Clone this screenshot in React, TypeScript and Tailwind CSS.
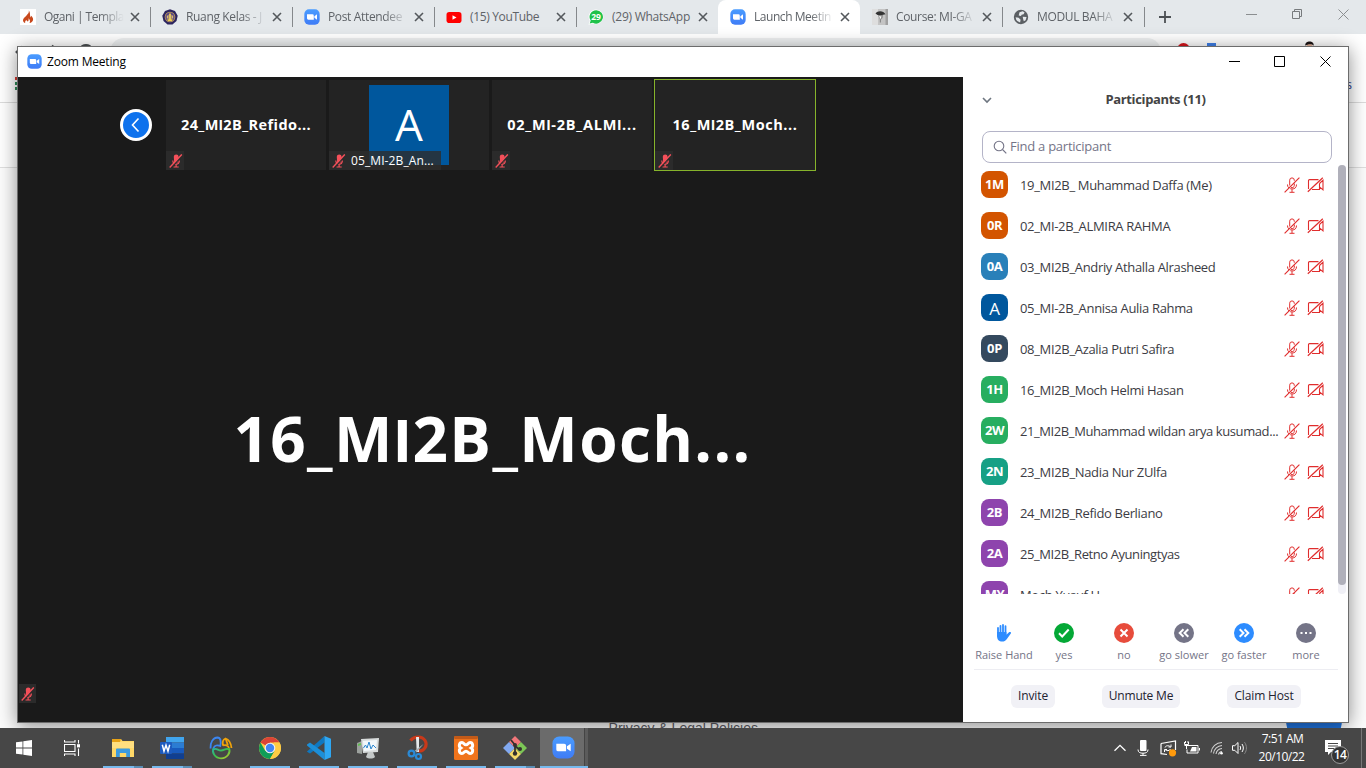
import React from "react";

function ZoomLogo({ className }: { className: string }) {
  return (
    <svg viewBox="0 0 24 24" className={className}>
      <defs>
        <linearGradient id="zg" x1="0" y1="0" x2="0" y2="1">
          <stop offset="0" stopColor="#4a9cff" />
          <stop offset="1" stopColor="#3f7cf6" />
        </linearGradient>
      </defs>
      <rect x="0.5" y="0.5" width="23" height="23" rx="7" fill="url(#zg)" />
      <path d="M4.5 8h8.2a2 2 0 0 1 2 2v6H6.5a2 2 0 0 1-2-2zM15.6 10.8l3.9-2.8v8l-3.9-2.8z" fill="#fff" />
    </svg>
  );
}

function FlameIcon() {
  return (
    <svg viewBox="0 0 16 16" className="size-4 bg-white">
      <path d="M8.8 1.5c.6 2.4-1 3.300-2.300 5C5 8.300 3 9.300 3 11.200c0 1.300.9 2.300 2.300 2.900-.6-1.500.1-2.600 1.300-3.200.2 1 .5 1.300 1.300 1.500 1-1 .9-2.200.3-3.200 1.800 1 2.300 2.900 1.300 4.900 2-.5 3.600-1.700 3.600-3.900 0-1.500-1-2-1.400-3.400-.6.500-.8 1-.7 1.700C9.300 6.600 10.800 4 8.800 1.500z" fill="#c8481c" />
    </svg>
  );
}

function CrestIcon() {
  return (
    <svg viewBox="0 0 16 16" className="size-4">
      <path d="M8 .3l5 1.800 2.700 4.600-1.200 5.200L10.500 15.500h-5L1.500 11.900.3 6.700 3 2.100z" fill="#2c2560" />
      <circle cx="8" cy="8" r="5.300" fill="#c8a254" />
      <circle cx="8" cy="8" r="4.600" fill="#574487" />
      <path d="M8 3.800l1.500 2.400v4.600H6.500V6.200zM5 10.500h6l-1 1.600H6z" fill="#f0cf4a" />
      <path d="M7.300 6h1.400v4H7.300zM4.800 6.500h1.200v3H4.800zM10 6.500h1.200v3H10z" fill="#d9b877" />
    </svg>
  );
}

function YoutubeIcon() {
  return (
    <svg viewBox="0 0 16 16" className="size-4">
      <rect x="0.500" y="3" width="15" height="11" rx="2.800" fill="#f00" />
      <path d="M6.500 6.200v4.600l4-2.300z" fill="#fff" />
    </svg>
  );
}

function WhatsappIcon() {
  return (
    <svg viewBox="0 0 16 16" className="size-4">
      <path d="M8.200.4a7.400 7.400 0 1 1-3.400 14.100L.5 15.800l1.300-4.100A7.400 7.400 0 0 1 8.200.4z" fill="#fff" />
      <path d="M8.200 1.200a6.700 6.700 0 1 1-3.300 12.500l-3.200.9 1-3A6.700 6.700 0 0 1 8.200 1.200z" fill="#1fc24a" />
      <text x="8" y="11" fontSize="8.500" fontWeight="700" textAnchor="middle" fill="#fff" fontFamily="Open Sans, sans-serif">29</text>
    </svg>
  );
}

function CourseIcon() {
  return (
    <svg viewBox="0 0 16 16" className="size-4">
      <rect width="16" height="16" fill="#c4c4c4" />
      <rect width="6" height="16" fill="#dedede" />
      <rect x="13.500" width="2.500" height="16" fill="#a0a0a0" />
      <path d="M3.500 4.500C5.500 1.500 11.500 1.500 13.500 5.300l-3.500.7H5.500z" fill="#333" />
      <path d="M6 6h5l-.5 3L9 10.500 9 13.500H7.800V10z" fill="#8a8a8a" />
      <path d="M7 7l2.500.5-1 2.800z" fill="#fff" />
    </svg>
  );
}

function GlobeIcon() {
  return (
    <svg viewBox="0 0 16 16" className="-ml-px size-4">
      <circle cx="8" cy="8" r="7.200" fill="#5b5f63" />
      <path d="M2.600 8.200l3 .6 2 2-.5 2.800A6 6 0 0 1 2.600 8.200zM6.500 3.200l3.300-.9 1.800 1.200-1 1.700-2 .5-.6 1.400-2.300-.7zM9.700 7.800l3.900.3-1 3.200-1.800 1-.6-2z" fill="#e4e8eb" />
    </svg>
  );
}

const fadeMask = "[mask-image:linear-gradient(to_right,black_70%,transparent)]";

const tabs = [
  { icon: <FlameIcon />, title: "Ogani | Templa", track: "tracking-[-0.520px]", fade: true, sep: true },
  { icon: <CrestIcon />, title: "Ruang Kelas - J", track: "tracking-[-0.350px]", fade: true, sep: true },
  { icon: <ZoomLogo className="size-4" />, title: "Post Attendee", track: "tracking-[-0.350px]", fade: true, sep: true },
  { icon: <YoutubeIcon />, title: "(15) YouTube", track: "tracking-[-0.350px]", fade: false, sep: true },
  { icon: <WhatsappIcon />, title: "(29) WhatsApp", track: "tracking-[-0.250px]", fade: false, sep: false },
  { icon: <ZoomLogo className="size-4" />, title: "Launch Meetin", track: "tracking-[-0.450px]", fade: true, sep: false, active: true },
  { icon: <CourseIcon />, title: "Course: MI-GA", track: "tracking-[-0.350px]", fade: true, sep: true },
  { icon: <GlobeIcon />, title: "MODUL BAHA", track: "tracking-[-0.350px]", fade: true, sep: true },
];

function Browser() {
  return (
    <div className="flex h-[728px] flex-col bg-white">
      <div className="flex h-[34px] shrink-0 bg-[#e4e8eb] pl-2">
        {tabs.map((t) => (
          <div
            key={t.title}
            className={
              "relative flex h-[34px] w-[142px] shrink-0 items-center pl-3 " +
              (t.active ? "rounded-t-lg bg-white" : "")
            }
          >
            {t.icon}
            <div className={"ml-2 w-[80px] text-[12px] whitespace-nowrap text-[#5f6368] " + t.track + " " + (t.fade ? fadeMask : "")}>
              {t.title}
            </div>
            <svg viewBox="0 0 10 10" className="ml-[6px] size-[10px]">
              <path d="M1 1l8 8M9 1l-8 8" stroke="#54585c" strokeWidth="1.600" />
            </svg>
            {t.sep && <div className="absolute top-[7px] -right-px h-5 w-px bg-[#85888b]" />}
          </div>
        ))}
        <svg viewBox="0 0 12 12" className="mt-[11px] ml-[15px] size-3">
          <path d="M6 0v12M0 6h12" stroke="#4c5054" strokeWidth="1.800" />
        </svg>
        <div className="ml-auto flex items-start gap-[35px] pt-[9px] pr-[17px]">
          <svg viewBox="0 0 11 11" className="size-[11px]"><path d="M0 5.500h11" stroke="#8b8e90" /></svg>
          <svg viewBox="0 0 11 11" className="size-[11px]"><path d="M.5 2.500h7v7h-7zM2.500 2.500v-2h7v7h-2" stroke="#777a7d" fill="none" /></svg>
          <svg viewBox="0 0 11 11" className="size-[11px]"><path d="M.5.5l10 10M10.500.5l-10 10" stroke="#8b8e90" /></svg>
        </div>
      </div>
      <div className="flex h-[35px] shrink-0 items-start pt-1">
        <svg viewBox="0 0 96 34" className="h-[34px] w-24">
          <path d="M22 8.500L16.500 14l5.500 5.500M52 7.500l5 5.500M80 10.500a7 7 0 0 1 12 0" stroke="#4b4f52" strokeWidth="2" fill="none" />
        </svg>
        <div className="ml-[14px] h-7 w-[1051px] rounded-full bg-[#eef0f1]" />
        <div className="mt-[5px] flex gap-[17px] pl-[16px]">
          <div className="size-[13px] rounded-full bg-[#d8141b]" />
          <div className="h-3 w-[9px] bg-[#3e7fe8]" />
        </div>
        <svg viewBox="0 0 16 16" className="mt-[2px] ml-[86px] size-[15px]">
          <circle cx="8" cy="7.500" r="3.500" fill="#e8b49a" />
          <path d="M3.500 6C3 .5 13 0 12.500 6 10 3.500 6 4.500 3.500 6z" fill="#1c1414" />
        </svg>
      </div>
      <div className="flex h-[34px] shrink-0 items-center justify-between border-b border-[#dcdcdc] pl-[15px]">
        <div className="flex flex-col gap-[2px] pb-1">
          <div className="h-[3px] w-3 bg-[#d63b34]" />
          <div className="h-[3px] w-3 bg-[#2e8b57]" />
          <div className="h-[3px] w-3 bg-[#2e8b57]" />
        </div>
        <div className="pr-[14px] pb-[2px] text-[12px] text-[#2b3a86]">s</div>
      </div>
      <div className="h-[65px] shrink-0 border-b border-[#dfdfdf] bg-white" />
      <div className="flex min-h-0 grow items-end justify-end overflow-hidden bg-[#fcfcfc]">
        <div className="mr-[528px] h-2 font-['Liberation_Sans'] text-[14px] leading-4 whitespace-nowrap text-[#5c5c66]">
          Privacy &amp; Legal Policies
        </div>
        <div className="mr-[24px] size-14 shrink-0 translate-y-5 rounded-full bg-[#1f74e0]" />
      </div>
    </div>
  );
}

function MutedMic({ className }: { className: string }) {
  return (
    <svg viewBox="0 0 14 14" className={className}>
      <path d="M4.800 2.800a2.400 2.400 0 0 1 4.800 0L9.200 8.600H5.200z" fill="#f4505a" />
      <path d="M3.800 6.500c.1 2.600 1.500 3.700 3.300 3.700s3.200-1.100 3.300-3.700M7.100 10v2.500M4.500 13h5.200" stroke="#f4505a" strokeWidth="1.200" fill="none" />
      <path d="M2.200 13.800L13.300 1.600" stroke="#2b2b2b" strokeWidth="1.400" />
      <path d="M.7 13.400L12.800.4" stroke="#f4505a" strokeWidth="1.400" />
    </svg>
  );
}

/* Bold display name with a plain, unserifed capital I. */
function BoldName({ text }: { text: string }) {
  return (
    <>
      {text.split(/(I)/).map((part, i) =>
        part === "I" ? <span key={i} className="font-['Liberation_Sans'] leading-none">I</span> : part
      )}
    </>
  );
}

const tiles = [
  { title: "24_MI2B_Refido...", track: "tracking-[0.420px]" },
  { letter: "A", label: "05_MI-2B_An..." },
  { title: "02_MI-2B_ALMI...", track: "tracking-[0.780px]" },
  { title: "16_MI2B_Moch...", track: "tracking-[0.580px]", active: true },
];

function Stage() {
  return (
    <div className="flex w-[945px] shrink-0 flex-col bg-[#1a1a1a]">
      <div className="flex h-[93px] shrink-0 gap-[3px] pt-[3px] pl-[102px]">
        <div className="mt-[29px] mr-[11px] flex size-8 items-center justify-center rounded-full border-[3px] border-white bg-[#0e72ed]">
          <svg viewBox="0 0 16 16" className="size-4"><path d="M10.500 1.500L4.500 8l6 6.500" stroke="#fff" strokeWidth="1.600" fill="none" /></svg>
        </div>
        {tiles.map((t, i) => (
          <div
            key={i}
            className={"relative flex h-[90px] w-40 items-center justify-center bg-[#232323] " + (t.active ? "outline outline-[#86b32b]" : "")}
          >
            {t.letter ? (
              <div className="flex size-20 items-center justify-center bg-[#00579d] pb-[3px] text-[44px] font-medium text-white">{t.letter}</div>
            ) : (
              <div className={"text-[14.500px] font-bold whitespace-nowrap text-white " + t.track}>
                <BoldName text={t.title ?? ""} />
              </div>
            )}
            <div className="absolute bottom-0 left-0 flex h-[19px] items-center gap-[5px] bg-[#2d2d2d]/80 pr-[1px] pl-[3px] text-[12px] whitespace-nowrap text-white">
              <MutedMic className="size-[14px]" />
              {t.label && <span className="pr-[6px] tracking-[0.100px]">{t.label}</span>}
            </div>
          </div>
        ))}
      </div>
      <div className="flex grow items-center justify-center pt-[22px] pl-[4px] text-[62px] font-bold whitespace-nowrap text-white">
        <span className="tracking-[1.400px]"><BoldName text="16_MI2B_Moch..." /></span>
      </div>
      <div className="mb-[19px] ml-px flex h-[19px] w-[17px] shrink-0 items-center justify-center bg-[#2b2b2b]">
        <MutedMic className="size-[14px]" />
      </div>
    </div>
  );
}

function MicOff() {
  return (
    <svg viewBox="0 0 16 16" className="size-4" fill="none" stroke="#e02d2d" strokeWidth="1">
      <path d="M5.700 8.500V3.200a2.300 2.300 0 0 1 4.600 0v.6M10.300 6.500v2a2.300 2.300 0 0 1-3.300 2M3.500 7.500c0 1.500.4 2.500 1.200 3.300M12.500 7.500c0 3-1.700 4.500-4.500 4.500-.7 0-1.300-.1-1.800-.3M8 12.200v3M5.500 15.300h5" />
      <path d="M.6 15.400L15.400.6" strokeWidth="1.200" />
    </svg>
  );
}

function CamOff() {
  return (
    <svg viewBox="0 0 17 16" className="h-4 w-[17px]" fill="none" stroke="#e02d2d" strokeWidth="1.100">
      <path d="M1.500 12V3.600a1 1 0 0 1 1-1h9M12.500 6.500v6h-7.500M12.500 6.500l3.500-3.300v9.600l-3.500-3" />
      <path d="M.8 14.800L15.800.8" strokeWidth="1.200" />
    </svg>
  );
}

const people = [
  { a: "1M", c: "bg-[#d35400]", n: "19_MI2B_ Muhammad Daffa (Me)" },
  { a: "0R", c: "bg-[#d35400]", n: "02_MI-2B_ALMIRA RAHMA" },
  { a: "0A", c: "bg-[#2980b9]", n: "03_MI2B_Andriy Athalla Alrasheed" },
  { a: "A", c: "bg-[#00579d]", n: "05_MI-2B_Annisa Aulia Rahma" },
  { a: "0P", c: "bg-[#34495e]", n: "08_MI2B_Azalia Putri Safira" },
  { a: "1H", c: "bg-[#27ae60]", n: "16_MI2B_Moch Helmi Hasan" },
  { a: "2W", c: "bg-[#27ae60]", n: "21_MI2B_Muhammad wildan arya kusumad..." },
  { a: "2N", c: "bg-[#16a085]", n: "23_MI2B_Nadia Nur ZUlfa" },
  { a: "2B", c: "bg-[#8e44ad]", n: "24_MI2B_Refido Berliano" },
  { a: "2A", c: "bg-[#8e44ad]", n: "25_MI2B_Retno Ayuningtyas" },
  { a: "MY", c: "bg-[#8e44ad]", n: "Moch Yusuf H" },
];

function Dot({ fill, d }: { fill: string; d: string }) {
  return (
    <svg viewBox="0 0 20 20" className="size-5">
      <circle cx="10" cy="10" r="10" fill={fill} />
      <path d={d} stroke="#fff" strokeWidth="2" fill="none" />
    </svg>
  );
}

const reactions = [
  {
    label: "Raise Hand",
    w: "w-[64px]",
    icon: (
      <svg viewBox="0 0 20 20" className="size-5">
        <path d="M4 5v8M6.500 2.800v9M9 2V12M11.500 3.200V12" stroke="#2d8cff" strokeWidth="1.800" strokeLinecap="round" />
        <path d="M3.100 9h9.300v2.700l2.600-2.500c1-.5 2.400.2 2 1l-4.300 6c-1.200 1.800-2.600 2.300-4.500 2.300-3.200 0-5.100-2-5.100-5z" fill="#2d8cff" />
      </svg>
    ),
  },
  { label: "yes", w: "w-[56px]", icon: <Dot fill="#04a836" d="M5 10.300l3.200 3.200 6.500-7" /> },
  { label: "no", w: "w-[64px]", icon: <Dot fill="#e74c3c" d="M6.500 6.500l7 7M13.500 6.500l-7 7" /> },
  { label: "go slower", w: "w-[56px]", icon: <Dot fill="#747487" d="M9.500 6.200L5.700 10l3.800 3.800M14.300 6.200L10.500 10l3.800 3.800" /> },
  { label: "go faster", w: "w-[64px]", icon: <Dot fill="#2d8cff" d="M5.700 6.200L9.500 10l-3.800 3.800M10.500 6.200l3.800 3.800-3.800 3.800" /> },
  { label: "more", w: "w-[60px]", icon: <Dot fill="#747487" d="M4.500 10h2M9 10h2M13.500 10h2" /> },
];

function Participants() {
  return (
    <div className="flex grow flex-col bg-white">
      <div className="relative flex h-[54px] shrink-0 items-center justify-center pb-[9px] text-[13px]">
        <svg viewBox="0 0 10 8" className="absolute top-[19px] left-[19px] h-2 w-[10px]">
          <path d="M1 2l4 4 4-4" stroke="#6e7680" strokeWidth="1.600" fill="none" />
        </svg>
        <span className="font-bold tracking-[-0.340px] text-[#444]">Participants (11)</span>
      </div>
      <div className="mx-[19px] mr-4 flex h-8 shrink-0 items-center gap-[3px] rounded-[8px] border border-[#b4b4c8] pb-px pl-[10px] text-[13px] text-[#747487]">
        <svg viewBox="0 0 14 14" className="size-[14px]" fill="none" stroke="#747487" strokeWidth="1.100">
          <circle cx="6" cy="6" r="4.800" />
          <path d="M9.500 9.500l3.800 3.800" />
        </svg>
        <span className="tracking-[-0.250px]">Find a participant</span>
      </div>
      <div className="mt-px flex h-[430px] shrink-0 overflow-hidden pr-[2px]">
        <div className="flex w-[375px] shrink-0 flex-col">
          {people.map((p) => (
            <div key={p.n} className="flex h-[41px] shrink-0 items-center pr-[13px] pl-[18px]">
              <div
                className={
                  "flex size-[27px] shrink-0 items-center justify-center rounded-[8px] text-white " +
                  (p.a === "A" ? "pt-[2px] text-[17px] " : "pt-px text-[13px] font-bold tracking-[-0.400px] ") +
                  p.c
                }
              >
                {p.a}
              </div>
              <span
                className={
                  "ml-3 w-[264px] pt-[3px] text-[13px] whitespace-nowrap text-[#3c3c44] " +
                  (p.n.startsWith("21") ? "tracking-[-0.410px]" : p.n.startsWith("25") ? "tracking-[-0.420px]" : "tracking-[-0.330px]")
                }
              >
                {p.n}
              </span>
              <span className="flex gap-[7px]">
                <MicOff />
                <CamOff />
              </span>
            </div>
          ))}
        </div>
        <div className="mt-px h-[429px] w-2 shrink-0 rounded-full bg-[#f0f0f6]">
          <div className="h-[420px] w-2 rounded-full bg-[#b0b0ba]" />
        </div>
      </div>
      <div className="mr-[10px] ml-[11px] flex h-[76px] shrink-0 items-start border-b border-[#ededf2] pt-[29px]">
        <div className="-ml-[2px] flex">
          {reactions.map((r) => (
            <div key={r.label} className={"flex flex-col items-center text-[11px] whitespace-nowrap text-[#747487] " + r.w}>
              {r.icon}
              <span className="mt-[3px] leading-[18px]">{r.label}</span>
            </div>
          ))}
        </div>
      </div>
      <div className="flex items-start pt-[15px] pl-12 text-[12px] whitespace-nowrap text-[#222230]">
        <button className="h-[23px] w-11 rounded-md bg-[#f1f1f6] pb-px tracking-[-0.100px]">Invite</button>
        <button className="ml-[47px] h-[23px] w-[78px] rounded-md bg-[#f1f1f6] pb-px tracking-[-0.200px]">Unmute Me</button>
        <button className="ml-[47px] h-[23px] w-[74px] rounded-md bg-[#f1f1f6] pb-px tracking-[-0.150px]">Claim Host</button>
      </div>
    </div>
  );
}

function MeetingWindow() {
  return (
    <div className="absolute top-[46px] left-[17px] flex h-[677px] w-[1332px] flex-col border border-[#6c6c6c] bg-white shadow-[0_3px_18px_rgba(0,0,0,0.45)]">
      <div className="flex h-[30px] shrink-0 items-center pl-[9px]">
        <ZoomLogo className="mb-px size-[15px]" />
        <span className="ml-[5px] text-[12px] tracking-[-0.180px] text-black">Zoom Meeting</span>
        <div className="ml-auto flex gap-[34px] pr-[17px] pb-[2px]">
          <svg viewBox="0 0 11 11" className="size-[11px]"><path d="M0 5.500h11" stroke="#000" /></svg>
          <svg viewBox="0 0 11 11" className="size-[11px]"><path d="M.5.5h10v10H.5z" stroke="#000" fill="none" /></svg>
          <svg viewBox="0 0 11 11" className="ml-px size-[11px]"><path d="M.5.5l10 10M10.500.5l-10 10" stroke="#000" /></svg>
        </div>
      </div>
      <div className="flex min-h-0 grow">
        <Stage />
        <Participants />
      </div>
    </div>
  );
}

const apps = [
  {
    name: "Files", run: "split",
    icon: (
      <svg viewBox="0 0 24 24" className="size-6">
        <path d="M1 3h9l1.500 2H23v16H1z" fill="#ffd867" />
        <path d="M1 3h9l-1 3H1z" fill="#e8a317" />
        <path d="M1 6h22v6H1z" fill="#ffdf80" />
        <path d="M5 13.500a1 1 0 0 1 1-1h12a1 1 0 0 1 1 1V21h-3.800v-4H8.800v4H5z" fill="#3c9be0" />
      </svg>
    ),
  },
  {
    name: "Word", run: "split",
    icon: (
      <svg viewBox="0 0 24 24" className="size-6">
        <path d="M6 1h18v5.500H6z" fill="#41a5ee" /><path d="M6 6.500h18V12H6z" fill="#2b7cd3" />
        <path d="M6 12h18v5.500H6z" fill="#185abd" /><path d="M6 17.500h18V23H6z" fill="#103f91" />
        <rect y="6" width="12" height="12" rx="1" fill="#1d5bbf" />
        <path d="M2.300 8.800l1.700 6.400 2-6 2 6 1.700-6.400" stroke="#fff" strokeWidth="1.500" fill="none" />
      </svg>
    ),
  },
  {
    name: "Clover", run: "",
    icon: (
      <svg viewBox="0 0 24 24" className="size-6" fill="none" strokeWidth="1.800">
        <defs><linearGradient id="cl" x1="0" y1="0" x2="1" y2="1"><stop offset="0" stopColor="#27b0a0" /><stop offset="0.500" stopColor="#3cc04a" /><stop offset="1" stopColor="#c8cf2a" /></linearGradient></defs>
        <path d="M1.500 12.500C1 6.500 4 1.800 8.500 1.500c3 0 3.800 3.500 2.800 8.500C8.500 8.500 5.500 9.500 4.500 12" stroke="#3c86f0" />
        <path d="M14 9.500C13.200 6 14.500 3.300 16.500 2.500c3 1 5.500 5 6 9.500M14 9.500c2.500-1 5 0 6 2.500M16.800 3l2 6" stroke="#f0a30a" />
        <path d="M4.500 12c-2 4.500 1.500 10.300 7.500 10.300S22 17 20 12M4.500 13.500c2.500-2 4.500 1 7.500 1s5.500-3 8-1" stroke="url(#cl)" />
      </svg>
    ),
  },
  {
    name: "Chrome", run: "full",
    icon: (
      <svg viewBox="0 0 24 24" className="size-6">
        <circle cx="12" cy="12" r="11" fill="#fc4" />
        <path d="M12 12L2.500 6.500A11 11 0 0 1 21.500 6.500H12z" fill="#db4437" />
        <path d="M2.500 6.500A11 11 0 0 0 12 23l4.800-8.300L7.200 14.700z" fill="#0f9d58" />
        <path d="M21.500 6.500A11 11 0 0 1 12 23l4.800-8.300L16 6.500z" fill="#fc4" />
        <circle cx="12" cy="12" r="5.300" fill="#f1f1f1" /><circle cx="12" cy="12" r="4.200" fill="#4285f4" />
      </svg>
    ),
  },
  {
    name: "Code", run: "full",
    icon: (
      <svg viewBox="0 0 24 24" className="size-6">
        <path d="M0 15.500L17.500 0v6.500L3 17.500 0 15.800z" fill="#0f78c0" />
        <path d="M0 8.500l3-2L17.500 17v7L0 9.500z" fill="#1c8fd8" />
        <path d="M17.500 0L24 2.800v18.400L17.500 24z" fill="#2ea7f2" />
      </svg>
    ),
  },
  {
    name: "Monitor", run: "full",
    icon: (
      <svg viewBox="0 0 24 24" className="size-6">
        <path d="M1 7l5-2v13l-5-1z" fill="#9ca19d" /><path d="M2 8l3-1v2l-3 1z" fill="#5fc04f" />
        <path d="M5 3l18-1-1 14-15 1z" fill="#d8dcdc" /><path d="M7 5l14-1-1 10-12 1z" fill="#f2f7fa" />
        <path d="M7.500 12l2-3 1.500 3 2-6 2 7 2-4 3 3" stroke="#2a86cf" fill="none" />
        <path d="M12 16h5l2 5c-2 2-7 2-9 0z" fill="#c4c8c8" />
      </svg>
    ),
  },
  {
    name: "Snip", run: "full",
    icon: (
      <svg viewBox="0 0 24 24" className="size-6 overflow-visible" fill="none">
        <path d="M5.500 4.500C9.500-.2 17-.2 20 4.500S19 16.500 13 14.500" stroke="#c8391a" strokeWidth="3.200" />
        <path d="M11 1h3V16h-2.300z" fill="#e6e9eb" /><path d="M18.500 8l-7 8.500-1.500-2z" fill="#a8aeb2" />
        <circle cx="6.500" cy="17.500" r="2.900" stroke="#2a8ad6" strokeWidth="2.200" /><circle cx="13.500" cy="20.500" r="2.500" stroke="#2a8ad6" strokeWidth="2.200" />
      </svg>
    ),
  },
  {
    name: "Xampp", run: "full",
    icon: (
      <svg viewBox="0 0 24 24" className="size-6">
        <rect width="24" height="24" rx="1.500" fill="#f0741c" /><rect width="24" height="3" rx="1.500" fill="#c25a18" />
        <path d="M8 6.500c-3 0-3.500 4-1.200 5.500C4.500 13.500 5 17.500 8 17.500c2 0 2-2.300 4-2.300s2 2.300 4 2.300c3 0 3.500-4 1.200-5.500C19.500 10.500 19 6.500 16 6.500c-2 0-2 2.300-4 2.300s-2-2.300-4-2.300z" fill="none" stroke="#fff" strokeWidth="3" />
      </svg>
    ),
  },
  {
    name: "Git", run: "split",
    icon: (
      <svg viewBox="0 0 24 24" className="size-6">
        <path d="M12 0l6 6-6 6-6-6z" fill="#f2777a" /><path d="M6 6l6 6-6 6-6-6z" fill="#82a9f0" />
        <path d="M18 6l6 6-6 6-6-6z" fill="#7cc656" /><path d="M12 12l6 6-6 6-6-6z" fill="#f4d868" />
        <path d="M8 4l4 5v9M12 10l5 4" stroke="#33302e" strokeWidth="1.800" fill="none" />
        <circle cx="12" cy="9" r="2" fill="#33302e" /><circle cx="12" cy="17.500" r="2.200" fill="#33302e" /><circle cx="17" cy="13" r="2" fill="#33302e" />
      </svg>
    ),
  },
];

function Taskbar() {
  return (
    <div className="relative flex h-10 items-center bg-[#474747]">
      <svg viewBox="0 0 16 16" className="ml-4 size-4" fill="#fff">
        <path d="M0 2.300l6.500-.9v6.200H0zM7.300 1.300L16 0v7.600H7.300zM0 8.400h6.500v6.200L0 13.700zM7.300 8.400H16V16l-8.700-1.300z" />
      </svg>
      <svg viewBox="0 0 17 16" className="ml-8 h-4 w-[17px]" fill="none" stroke="#fff" strokeWidth="1.100">
        <path d="M.5 4.500h10.500v7H.5zM.5 0v2h10.500V0M.5 16v-2h10.500v2M14.500 0v3.500M14.500 8.500V16" />
        <path d="M13 4.200h3v3.200h-3z" fill="#fff" stroke="none" />
      </svg>
      <div className="ml-[22px] flex h-10 gap-[9px]">
        {apps.map((a) => (
          <div key={a.name} className="flex h-10 w-10 flex-col items-center justify-between pt-[8px]">
            {a.icon}
            {a.run === "full" && <div className="h-[2px] w-10 bg-[#76b9ed]" />}
            {a.run === "split" && (
              <div className="flex h-[2px] w-10"><div className="w-[31px] bg-[#76b9ed]" /><div className="grow bg-[#5a8db4]" /></div>
            )}
          </div>
        ))}
      </div>
      <div className="ml-[5px] flex h-10 w-12 border-b-2 border-[#76b9ed] bg-[#6b6b6b]">
        <div className="flex w-[45px] items-center justify-center border-r border-[#444] pl-[3px]"><ZoomLogo className="size-[23px]" /></div>
        <div className="grow bg-[#5b5b5b]" />
      </div>
      <div className="ml-auto flex items-center pr-[17px] text-white">
        <svg viewBox="0 0 12 8" className="mr-[11px] h-2 w-3"><path d="M.5 6.800L6 1.300l5.500 5.500" stroke="#fff" strokeWidth="1.300" fill="none" /></svg>
        <svg viewBox="0 0 12 16" className="mr-[10px] h-4 w-3" fill="none" stroke="#fff">
          <rect x="3" y="0" width="6.500" height="11" rx="1" fill="#fff" stroke="none" />
          <path d="M1 9.500c0 3 2 3.700 5 3.700s5-.7 5-3.700M6 13v2.500M3 15.400h6.500" />
        </svg>
        <svg viewBox="0 0 18 17" className="mr-[6px] h-[17px] w-[18px]" fill="none" stroke="#fff">
          <path d="M2 3.500L16.500 1v9M8 14.500l-6-.8V3.500" strokeWidth="1.200" />
          <path d="M6 7.500c.5-2 4-2.500 5.500-.5M12 4.500V7H9.500M11.500 9c-.8 2-4 2.300-5.500.5M5.500 12V9.500H8" />
          <circle cx="13.500" cy="12.800" r="3.600" fill="#ff9a0c" stroke="none" />
        </svg>
        <svg viewBox="0 0 17 14" className="mr-[10px] h-[14px] w-[17px]" fill="none" stroke="#fff">
          <path d="M5 4.500h10v7.500H4V8.500" /><path d="M16.500 7v2.500" strokeWidth="1.300" />
          <path d="M9 6h4.500v4.500H7z" fill="#fff" stroke="none" /><path d="M1.500 1v2.500h4V1M3.500 4v4M2.500 0v2M5 0v2M1.500 4.500h4" />
        </svg>
        <svg viewBox="0 0 14 14" className="mr-[8px] size-[14px]" fill="none" stroke="#d0d0d0" strokeWidth="1.100">
          <path d="M1 11.500A11 11 0 0 1 12 1.500M3.500 12.500A9 9 0 0 1 12 4.500M6 13a6.500 6.500 0 0 1 6-5.500M8.500 13.500a4 4 0 0 1 3.500-3" />
          <circle cx="11.500" cy="12.300" r="1.300" fill="#fff" stroke="none" />
        </svg>
        <svg viewBox="0 0 16 14" className="mr-[9px] h-[14px] w-4" fill="none" stroke="#fff">
          <path d="M.5 4.700h2.300L6 1.500v11L2.800 9.300H.5z" /><path d="M8 5c.8 1.200.8 2.800 0 4M10 3c1.800 2.500 1.800 5.500 0 8" /><path d="M12.500 1.200c2.600 3.500 2.600 8 0 11.600" stroke="#8a8a8a" />
        </svg>
        <div className="flex w-[52px] flex-col items-center text-[12px] leading-[18px] tracking-[-0.500px] whitespace-nowrap">
          <span className="pr-px">7:51 AM</span>
          <span className="pr-[3px]">20/10/22</span>
        </div>
        <div className="relative ml-[16px] h-6 w-6">
          <svg viewBox="0 0 17 16" className="mt-[3px] -ml-px h-4 w-[17px]">
            <path d="M1 1h16v12H7l-3 3v-3H1z" fill="#fff" /><path d="M4 4.500h10M4 7h10M4 9.500h6" stroke="#474747" />
          </svg>
          <div className="absolute top-[10px] left-[6px] flex size-[18px] items-center justify-center rounded-full border border-[#999] bg-[#333] text-[12px] font-semibold tracking-[-0.500px]">14</div>
        </div>
      </div>
      <div className="absolute top-0 right-[4px] h-10 w-px bg-[#777]" />
    </div>
  );
}

export default function App() {
  return (
    <div className="relative h-[768px] w-[1366px] overflow-hidden font-['Open_Sans','Noto_Sans',sans-serif]">
      <Browser />
      <MeetingWindow />
      <div className="relative">
        <Taskbar />
      </div>
    </div>
  );
}
